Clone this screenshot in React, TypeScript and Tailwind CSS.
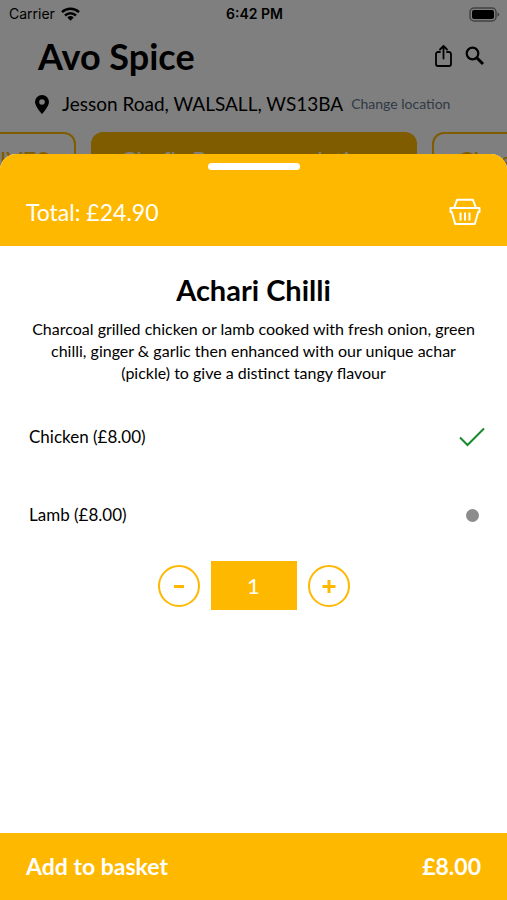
import { useState } from "react";

const dish = {
  name: "Achari Chilli",
  description:
    "Charcoal grilled chicken or lamb cooked with fresh onion, green chilli, ginger & garlic then enhanced with our unique achar (pickle) to give a distinct tangy flavour",
  options: [
    { id: "chicken", name: "Chicken", price: 8 },
    { id: "lamb", name: "Lamb", price: 8 },
  ],
};

const basketTotal = 24.9;

function formatPrice(value: number) {
  return `£${value.toFixed(2)}`;
}

export default function App() {
  const [selected, setSelected] = useState("chicken");
  const [quantity, setQuantity] = useState(1);
  const option = dish.options.find((o) => o.id === selected) ?? dish.options[0];

  return (
    <div className="relative h-screen overflow-hidden bg-white font-['Lato','Liberation_Sans',sans-serif] text-black">
      <MenuPage />
      <div className="absolute inset-0 flex flex-col bg-black/50 pt-[154px]">
        <section role="dialog" aria-label={dish.name} className="flex min-h-0 flex-1 flex-col overflow-hidden rounded-t-2xl bg-white">
          <header className="flex h-[92px] shrink-0 flex-col items-center bg-[#ffb800] px-[26px] pt-[9px] text-white">
            <span className="h-[7px] w-[92px] rounded-full bg-white" />
            <div className="mt-6 flex w-full items-center justify-between">
              <p className="text-[23px] leading-9">Total: {formatPrice(basketTotal)}</p>
              <button type="button" aria-label="View basket">
                <BasketIcon />
              </button>
            </div>
          </header>
          <main className="flex flex-1 flex-col px-[22px] pt-6">
            <h1 className="text-center text-[29px] leading-10 font-bold">{dish.name}</h1>
            <p className="mt-2 px-2 text-center text-base leading-[22px]">{dish.description}</p>
            <fieldset aria-label="Choose an option" className="mt-[14px]">
              {dish.options.map((o) => (
                <label key={o.id} className="flex h-[78px] cursor-pointer items-center justify-between pl-[7px] text-[17px]">
                  <span>
                    {o.name} ({formatPrice(o.price)})
                  </span>
                  <span className="grid w-[26px] place-items-center">
                    <input
                      type="radio"
                      name="option"
                      value={o.id}
                      checked={o.id === selected}
                      onChange={() => setSelected(o.id)}
                      className="col-start-1 row-start-1 h-[13px] w-[13px] appearance-none rounded-full bg-[#8c8c8c] checked:bg-transparent"
                    />
                    {o.id === selected ? <TickIcon /> : null}
                  </span>
                </label>
              ))}
            </fieldset>
            <div className="mt-[7px] flex items-center justify-center gap-[11px]">
              <StepButton label="Remove one" onClick={() => setQuantity((q) => Math.max(1, q - 1))}>
                <path d="M16 21.5h10" />
              </StepButton>
              <output className="grid h-[49px] w-[86px] place-items-center bg-[#ffb800] text-[22px] text-white">{quantity}</output>
              <StepButton label="Add one" onClick={() => setQuantity((q) => q + 1)}>
                <path d="M14.5 21.5h13M21 15v13" />
              </StepButton>
            </div>
          </main>
          <button type="button" className="flex h-[67px] shrink-0 items-center justify-between bg-[#ffb800] px-[26px] text-[23px] font-bold text-white">
            <span>Add to basket</span>
            <span>{formatPrice(option.price * quantity)}</span>
          </button>
        </section>
      </div>
    </div>
  );
}

function MenuPage() {
  return (
    <div>
      <div className="grid h-7 grid-cols-3 items-center pr-[7px] pl-[9px] font-['Inter','Liberation_Sans',sans-serif] text-sm">
        <span className="flex items-center gap-[6px]">
          Carrier <WifiIcon />
        </span>
        <span className="text-center font-semibold">6:42 PM</span>
        <span className="justify-self-end">
          <BatteryIcon />
        </span>
      </div>
      <div className="flex h-14 items-center justify-between pr-[22px] pl-[38px]">
        <h2 className="text-4xl leading-10 font-bold">Avo Spice</h2>
        <div className="flex items-center gap-[13px]">
          <button type="button" aria-label="Share">
            <ShareIcon />
          </button>
          <button type="button" aria-label="Search">
            <SearchIcon />
          </button>
        </div>
      </div>
      <div className="flex h-10 items-center pl-[35px]">
        <PinIcon />
        <span className="ml-[13px] text-[19px]">Jesson Road, WALSALL, WS13BA</span>
        <a href="#location" className="ml-2 text-sm text-slate-500">
          Change location
        </a>
      </div>
      <nav aria-label="Menu sections" className="mt-2 flex justify-center gap-[15px] text-2xl whitespace-nowrap">
        <a href="#olives" className="flex h-14 w-32 shrink-0 items-center justify-end rounded-xl border-2 border-[#ffb800] pr-6 text-[#ffb800]">
          OLIVES
        </a>
        <a href="#chefs" className="flex h-14 w-[326px] shrink-0 items-center justify-center rounded-xl bg-[#ffb800] text-white">
          Chef's Recommendations
        </a>
        <a href="#classics" className="flex h-14 w-32 shrink-0 items-center rounded-xl border-2 border-[#ffb800] pl-6 text-[#ffb800]">
          Classics
        </a>
      </nav>
    </div>
  );
}

function StepButton({ label, onClick, children }: { label: string; onClick: () => void; children: React.ReactNode }) {
  return (
    <button type="button" aria-label={label} onClick={onClick}>
      <svg width="42" height="42" viewBox="0 0 42 42" fill="none" stroke="#ffb800" aria-hidden>
        <circle cx="21" cy="21" r="20" strokeWidth="2" />
        <g strokeWidth="3">{children}</g>
      </svg>
    </button>
  );
}

function BasketIcon() {
  return (
    <svg className="block" width="32" height="28" viewBox="0 0 32 28" fill="none" stroke="currentColor" strokeWidth="2" strokeLinejoin="round" aria-hidden>
      <path d="M5 10 8 1.8h16l3 8.200" />
      <path d="M1.500 10h29v4h-1.300L25.800 26H6.200L2.800 14H1.500z" />
      <path d="M11.500 14.500v8M16 14.500v8M20.500 14.500v8" />
    </svg>
  );
}

function TickIcon() {
  return (
    <svg className="col-start-1 row-start-1" width="26" height="20" viewBox="0 0 26 20" fill="none" stroke="#168a2c" strokeWidth="2" aria-hidden>
      <path d="M1 10.500 8.500 18 25 1.500" />
    </svg>
  );
}

function WifiIcon() {
  return (
    <svg width="19" height="14" viewBox="0 0 19 14" aria-hidden>
      <g fill="none" stroke="currentColor" strokeWidth="2.500">
        <path d="M1 5.200a12.300 12.300 0 0 1 17 0" />
        <path d="M4 8.500a8 8 0 0 1 11 0" />
      </g>
      <path d="M9.500 13.800 6.300 10.500a4.700 4.700 0 0 1 6.400 0z" fill="currentColor" />
    </svg>
  );
}

function BatteryIcon() {
  return (
    <svg width="31" height="15" viewBox="0 0 31 15" aria-hidden>
      <rect x="1" y="1" width="26" height="13" rx="4" fill="none" stroke="#858585" strokeWidth="1.500" />
      <rect x="3" y="3" width="22" height="9" rx="2" />
      <path d="M28.500 5.500v4q1.800-.5 1.800-2t-1.800-2z" fill="#858585" />
    </svg>
  );
}

function ShareIcon() {
  return (
    <svg className="block" width="17" height="22" viewBox="0 0 17 22" fill="none" stroke="currentColor" strokeWidth="1.800" strokeLinecap="round" strokeLinejoin="round" aria-hidden>
      <path d="M5 7H3a2 2 0 0 0-2 2v10a2 2 0 0 0 2 2h11a2 2 0 0 0 2-2V9a2 2 0 0 0-2-2h-2" />
      <path d="M8.500 13.500V1M5 4.500 8.500 1 12 4.500" />
    </svg>
  );
}

function SearchIcon() {
  return (
    <svg className="block" width="20" height="20" viewBox="0 0 20 20" fill="none" stroke="currentColor" aria-hidden>
      <circle cx="7.500" cy="7.500" r="5.800" strokeWidth="2.200" />
      <path d="m12 12 6 6" strokeWidth="3" />
    </svg>
  );
}

function PinIcon() {
  return (
    <svg width="14" height="19" viewBox="0 0 14 19" aria-hidden>
      <path fillRule="evenodd" d="M7 0a7 7 0 0 0-7 7c0 4.500 7 12 7 12s7-7.500 7-12a7 7 0 0 0-7-7zm0 4.200a2.800 2.800 0 1 1 0 5.600 2.800 2.800 0 0 1 0-5.600z" />
    </svg>
  );
}
